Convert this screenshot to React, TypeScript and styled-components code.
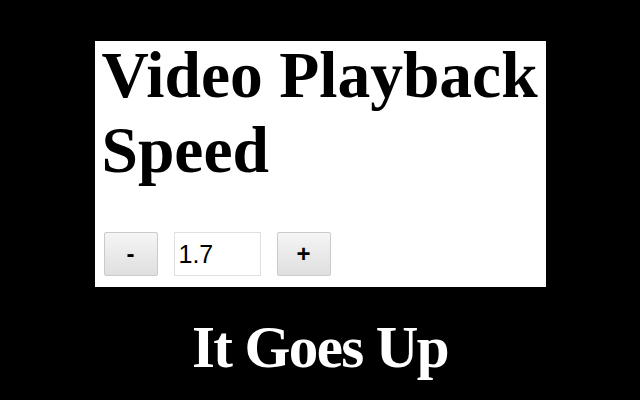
import React from "react";
import styled, { createGlobalStyle } from "styled-components";

const Global = createGlobalStyle`
  html, body { margin: 0; padding: 0; background: #000; }
  body { width: 640px; height: 400px; overflow: hidden; }
`;

const Page = styled.div`
  width: 640px;
  height: 400px;
  background: #000;
  display: flex;
  flex-direction: column;
  align-items: center;
  padding-top: 41px;
  box-sizing: border-box;
`;

const Panel = styled.div`
  width: 451px;
  height: 246px;
  background: #fff;
  box-sizing: border-box;
  display: flex;
  flex-direction: column;
  padding: 0 0 11px 0;
`;

const Heading = styled.h1`
  margin: -3px 0 0 0;
  padding-left: 7px;
  font-family: "Liberation Serif", "Times New Roman", serif;
  font-weight: 700;
  font-size: 65.5px;
  line-height: 75px;
  color: #000;
  white-space: nowrap;
`;

const Controls = styled.div`
  margin-top: auto;
  display: flex;
  gap: 16px;
  padding-left: 9px;
  align-items: stretch;
`;

const StepButton = styled.button`
  width: 54px;
  height: 44px;
  box-sizing: border-box;
  border: 1px solid #cacaca;
  border-radius: 2px;
  background: linear-gradient(#f5f5f5, #dfdfdf);
  font-family: "Liberation Sans", Arial, sans-serif;
  font-weight: 700;
  font-size: 24px;
  color: #000;
  padding: 0;
  display: flex;
  align-items: center;
  justify-content: center;
`;

const SpeedInput = styled.input`
  width: 87px;
  height: 44px;
  box-sizing: border-box;
  border: 1px solid #e0e0e0;
  background: #fff;
  font-family: "Liberation Sans", Arial, sans-serif;
  font-size: 25px;
  color: #000;
  padding: 0 4px;
  outline: none;
`;

const Caption = styled.div`
  margin-top: 26px;
  font-family: "Liberation Serif", "Times New Roman", serif;
  font-weight: 700;
  font-size: 59px;
  line-height: 68px;
  letter-spacing: -1.6px;
  color: #fff;
`;

export default function App() {
  return (
    <>
      <Global />
      <Page>
        <Panel>
          <Heading>
            Video Playback
            <br />
            Speed
          </Heading>
          <Controls>
            <StepButton>-</StepButton>
            <SpeedInput defaultValue="1.7" />
            <StepButton>+</StepButton>
          </Controls>
        </Panel>
        <Caption>It Goes Up</Caption>
      </Page>
    </>
  );
}
